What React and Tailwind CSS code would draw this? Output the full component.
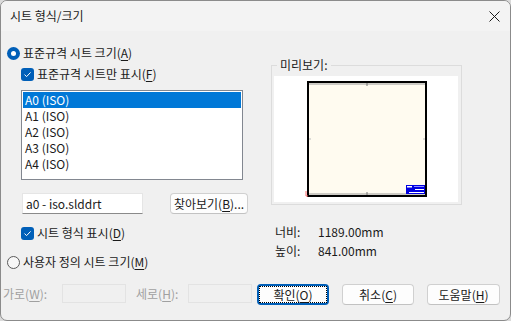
import React from "react";

const font = { fontFamily: '"Noto Sans CJK KR", "Noto Sans", sans-serif' };

function Mn({ k }) {
  return (
    <>
      (<span className="underline underline-offset-2">{k}</span>)
    </>
  );
}

function Check({ label, k }) {
  return (
    <div className="flex items-center h-[16px]">
      <span className="w-[13px] h-[13px] rounded-[3px] bg-[#005fb8] flex items-center justify-center">
        <svg width="9" height="9" viewBox="0 0 9 9">
          <path d="M1.5 4.6 L3.6 6.6 L7.6 2.4" fill="none" stroke="#fff" strokeWidth="1" />
        </svg>
      </span>
      <span className="ml-[3px]">
        {label}
        <Mn k={k} />
      </span>
    </div>
  );
}

function Radio({ label, k, on }) {
  return (
    <div className="flex items-center h-[16px]">
      {on ? (
        <span className="w-[13px] h-[13px] rounded-full bg-[#005fb8] flex items-center justify-center">
          <span className="w-[5px] h-[5px] rounded-full bg-white" />
        </span>
      ) : (
        <span className="w-[13px] h-[13px] rounded-full border border-[#5a5a5a] bg-[#f7f7f7]" />
      )}
      <span className="ml-[3px]">
        {label}
        <Mn k={k} />
      </span>
    </div>
  );
}

function Btn({ children, w, focus }) {
  return (
    <button
      className={`${w} h-[21px] rounded-[4px] bg-[#fdfdfd] text-[12px] text-[#1a1a1a] flex items-center justify-center ${
        focus ? "border-2 border-[#005fb8]" : "border border-[#d0d0d0] border-b-[#c2c2c2]"
      }`}
    >
      {focus ? (
        <span className="w-full h-full border border-dotted border-black flex items-center justify-center">
          {children}
        </span>
      ) : (
        children
      )}
    </button>
  );
}

const sizes = ["A0 (ISO)", "A1 (ISO)", "A2 (ISO)", "A3 (ISO)", "A4 (ISO)"];

export default function App() {
  return (
    <div className="w-[511px] h-[321px] bg-[#dadada]" style={font}>
      <div className="w-[511px] h-[321px] rounded-[7px] border border-[#8b8b8b] bg-[#f0f0f0] flex flex-col overflow-hidden text-[12px] leading-[16px] text-[#1a1a1a]">
        {/* Title bar */}
        <div className="h-[30px] bg-[#f3f3f3] flex items-center justify-between pl-[9px] pr-[10px]">
          <span className="text-[12px] text-[#1a1a1a]">시트 형식/크기</span>
          <svg width="11" height="11" viewBox="0 0 11 11">
            <path d="M0.5 0.5 L10.5 10.5 M10.5 0.5 L0.5 10.5" stroke="#1a1a1a" strokeWidth="1" />
          </svg>
        </div>

        <div className="flex">
          {/* Left column */}
          <div className="w-[254px] flex flex-col">
            <div className="mt-[14px] pl-[6px]">
              <Radio label="표준규격 시트 크기" k="A" on />
            </div>
            <div className="mt-[5px] pl-[20px]">
              <Check label="표준규격 시트만 표시" k="F" />
            </div>
            <div className="mt-[8px] ml-[20px] w-[222px] h-[90px] border border-[#828790] bg-white p-[1px]">
              {sizes.map((s, i) => (
                <div
                  key={s}
                  className={`h-[16px] px-[2px] flex items-center ${
                    i === 0 ? "bg-[#0078d7] text-white" : "text-[#1a1a1a]"
                  }`}
                >
                  {s}
                </div>
              ))}
            </div>
            <div className="mt-[13px] flex">
              <div className="ml-[21px] w-[121px] h-[21px] bg-white border border-[#e5e5e5] border-b-[#8a8a8a] flex items-center px-[3px]">
                a0 - iso.slddrt
              </div>
              <div className="ml-[27px]">
                <Btn w="w-[78px]">
                  찾아보기<Mn k="B" />...
                </Btn>
              </div>
            </div>
            <div className="mt-[11px] pl-[20px]">
              <Check label="시트 형식 표시" k="D" />
            </div>
            <div className="mt-[13px] pl-[6px]">
              <Radio label="사용자 정의 시트 크기" k="M" />
            </div>
          </div>

          {/* Right column */}
          <div className="ml-[16px] w-[191px] flex flex-col">
            <fieldset className="mt-[26px] border border-[#dcdcdc] pl-[2px] pr-[3px] pb-[2px]">
              <legend className="ml-[3px] px-[3px] text-[12px] leading-[16px]">미리보기:</legend>
              <div className="mt-[3px] h-[126px] bg-white flex items-center justify-center">
                <svg width="123" height="117" viewBox="0 0 123 117">
                  <rect x="3" y="1" width="118" height="114" fill="#fffbf0" stroke="#000" strokeWidth="2" />
                  <line x1="4" y1="3" x2="120" y2="3" stroke="#9a9a9a" strokeWidth="1" />
                  <line x1="4" y1="113" x2="120" y2="113" stroke="#9a9a9a" strokeWidth="1" />
                  <line x1="62" y1="2" x2="62" y2="5" stroke="#777" strokeWidth="1" />
                  <line x1="62" y1="111" x2="62" y2="114" stroke="#777" strokeWidth="1" />
                  <line x1="4" y1="58" x2="6" y2="58" stroke="#bbb" strokeWidth="1" />
                  <line x1="118" y1="58" x2="120" y2="58" stroke="#bbb" strokeWidth="1" />
                  <rect x="101" y="104" width="19" height="9" fill="#0000e0" />
                  <rect x="102" y="105" width="5" height="1.5" fill="#fff" />
                  <rect x="109" y="105" width="10" height="1" fill="#8f8fff" />
                  <rect x="110" y="108" width="9" height="1" fill="#fff" />
                  <rect x="104" y="111" width="15" height="1" fill="#fff" />
                  <path d="M1 110 L1 115 L3 115" fill="none" stroke="#ff6a6a" strokeWidth="1" />
                </svg>
              </div>
            </fieldset>
            <div className="mt-[19px] pl-[4px] flex h-[16px] items-center">
              <span className="w-[43px]">너비:</span>
              <span>1189.00mm</span>
            </div>
            <div className="mt-[3px] pl-[4px] flex h-[16px] items-center">
              <span className="w-[43px]">높이:</span>
              <span>841.00mm</span>
            </div>
          </div>
        </div>

        {/* Bottom row */}
        <div className="mt-[14px] flex items-start pl-[2px]">
          <span className="w-[59px] h-[19px] flex items-center text-[#a0a0a0]">
            가로<Mn k="W" />:
          </span>
          <div className="w-[64px] h-[19px] border border-[#e3e3e3] bg-[#f0f0f0]" />
          <span className="ml-[10px] w-[52px] h-[19px] flex items-center text-[#a0a0a0]">
            세로<Mn k="H" />:
          </span>
          <div className="w-[64px] h-[19px] border border-[#e3e3e3] bg-[#f0f0f0]" />
          <div className="ml-[5px]">
            <Btn w="w-[72px]" focus>
              확인<Mn k="O" />
            </Btn>
          </div>
          <div className="ml-[13px]">
            <Btn w="w-[72px]">
              취소<Mn k="C" />
            </Btn>
          </div>
          <div className="ml-[13px]">
            <Btn w="w-[73px]">
              도움말<Mn k="H" />
            </Btn>
          </div>
        </div>
      </div>
    </div>
  );
}
